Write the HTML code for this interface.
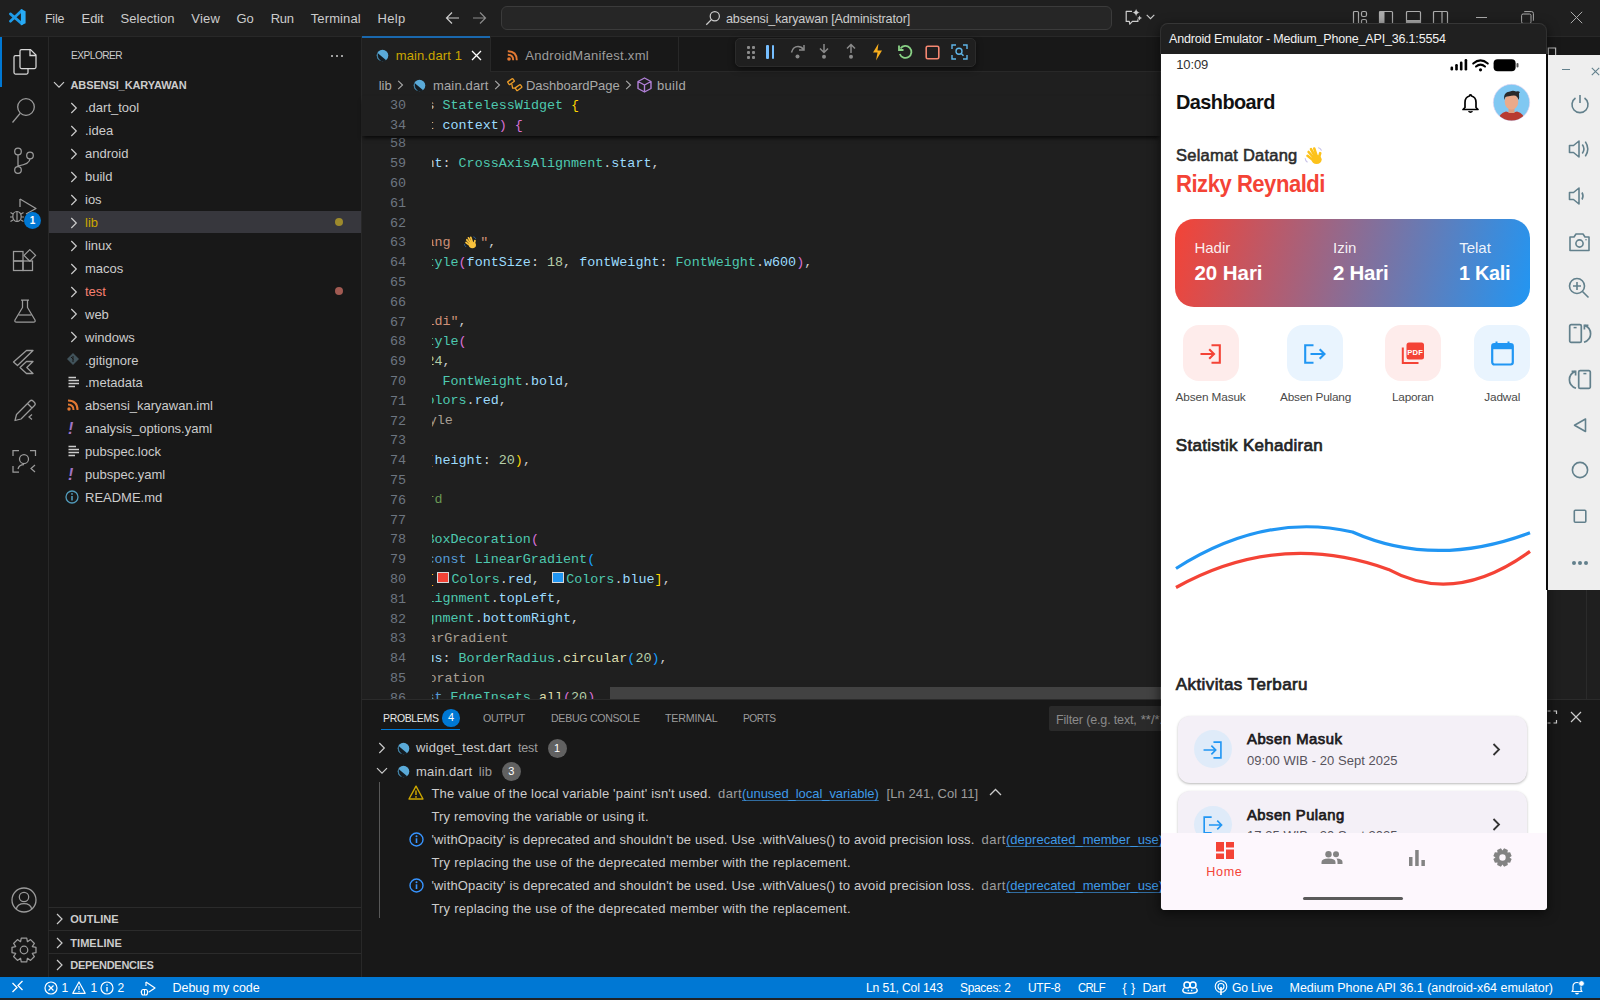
<!DOCTYPE html>
<html><head><meta charset="utf-8">
<style>
*{box-sizing:border-box;margin:0;padding:0}
html,body{width:1600px;height:1000px;overflow:hidden;background:#1f1f1f;font-family:"Liberation Sans",sans-serif}
body{position:relative}
.a{position:absolute}
svg.a{overflow:visible}
.t{position:absolute;white-space:pre;line-height:1}
</style></head><body>
<div class="a" style="left:0px;top:0px;width:1600px;height:37px;background:#1f1f1f;border-bottom:1px solid #282828;"></div>
<svg class="a" style="left:0px;top:0px;" width="36" height="36" viewBox="0 0 36 36" fill="none"><path d="M10.4 13.9 L21.8 23.6 M10.4 21.2 L21.8 10.6" stroke="#1e9be8" stroke-width="2.7" stroke-linecap="round"/><path d="M20.9 8.9 L25.6 11.2 V23.2 L20.9 25.6 Z" fill="#27aaf5"/></svg>
<div class="t" style="left:44.60px;top:12.45px;font-size:13px;color:#cccccc;letter-spacing:-0.225px;transform:scaleX(0.9550);transform-origin:0 0;">File</div>
<div class="t" style="left:81.60px;top:12.45px;font-size:13px;color:#cccccc;letter-spacing:-0.127px;">Edit</div>
<div class="t" style="left:120.50px;top:12.45px;font-size:13px;color:#cccccc;letter-spacing:0.057px;">Selection</div>
<div class="t" style="left:191.25px;top:12.45px;font-size:13px;color:#cccccc;letter-spacing:0.199px;">View</div>
<div class="t" style="left:236.50px;top:12.45px;font-size:13px;color:#cccccc;letter-spacing:-0.047px;">Go</div>
<div class="t" style="left:270.75px;top:12.45px;font-size:13px;color:#cccccc;letter-spacing:-0.286px;">Run</div>
<div class="t" style="left:310.75px;top:12.45px;font-size:13px;color:#cccccc;letter-spacing:0.109px;">Terminal</div>
<div class="t" style="left:377.50px;top:12.45px;font-size:13px;color:#cccccc;letter-spacing:0.312px;">Help</div>
<svg class="a" style="left:445px;top:11px;" width="15" height="14" viewBox="0 0 15 14" fill="none"><path d="M14 7 H1.5 M7 1.5 L1.5 7 L7 12.5" stroke="#cccccc" stroke-width="1.2"/></svg>
<svg class="a" style="left:472px;top:11px;" width="15" height="14" viewBox="0 0 15 14" fill="none"><path d="M1 7 H13.5 M8 1.5 L13.5 7 L8 12.5" stroke="#8b8b8b" stroke-width="1.2"/></svg>
<div class="a" style="left:501px;top:6px;width:611px;height:24px;background:#262626;border:1px solid #3b3b3b;border-radius:6px;"></div>
<svg class="a" style="left:705px;top:10px;" width="16" height="16" viewBox="0 0 16 16" fill="none"><circle cx="9.8" cy="6.2" r="4.6" stroke="#cccccc" stroke-width="1.2"/><path d="M6.6 9.4 L1.3 14.7" stroke="#cccccc" stroke-width="1.3"/></svg>
<div class="t" style="left:725.60px;top:12.45px;font-size:13px;color:#cccccc;letter-spacing:-0.173px;transform:scaleX(0.9707);transform-origin:0 0;">absensi_karyawan [Administrator]</div>
<svg class="a" style="left:1124px;top:8px;" width="20" height="18" viewBox="0 0 20 18" fill="none"><path d="M8 3.3 H2.2 V13.4 H5.3 L5.8 16.2 L8.4 13.4 H13.9 V11.2" stroke="#cccccc" stroke-width="1.2" stroke-linejoin="round"/><path d="M12.1 0.8 Q12.6 4.1 15.8 4.6 Q12.6 5.1 12.1 8.4 Q11.6 5.1 8.4 4.6 Q11.6 4.1 12.1 0.8 Z M15.6 7.5 Q15.9 9.7 18.1 10 Q15.9 10.3 15.6 12.5 Q15.3 10.3 13.1 10 Q15.3 9.7 15.6 7.5 Z" fill="#cccccc"/></svg>
<svg class="a" style="left:1146px;top:14.3px;" width="9" height="6" viewBox="0 0 9 6" fill="none"><path d="M0.7 0.8 L4.5 4.6 L8.3 0.8" stroke="#cccccc" stroke-width="1.1"/></svg>
<svg class="a" style="left:1352px;top:10px;" width="16" height="16" viewBox="0 0 16 16" fill="none"><rect x="1.5" y="1.5" width="5" height="13" rx="1" stroke="#ababab" stroke-width="1.2"/><rect x="9.5" y="1.5" width="5" height="5" rx="1.5" stroke="#ababab" stroke-width="1.2"/><rect x="9.5" y="9.5" width="5" height="5" rx="1.5" stroke="#ababab" stroke-width="1.2"/></svg>
<svg class="a" style="left:1378px;top:10px;" width="16" height="16" viewBox="0 0 16 16" fill="none"><rect x="1.5" y="1.5" width="13" height="14" rx="1" stroke="#ababab" stroke-width="1.2"/><rect x="1.5" y="1.5" width="5" height="14" fill="#ababab"/></svg>
<svg class="a" style="left:1405px;top:10px;" width="17" height="16" viewBox="0 0 17 16" fill="none"><rect x="1.5" y="1.5" width="14" height="14" rx="1" stroke="#ababab" stroke-width="1.2"/><rect x="1.5" y="10" width="14" height="5.5" fill="#ababab"/></svg>
<svg class="a" style="left:1432px;top:10px;" width="17" height="16" viewBox="0 0 17 16" fill="none"><rect x="1.5" y="1.5" width="14" height="14" rx="1" stroke="#ababab" stroke-width="1.2"/><path d="M10 1.5 V15.5" stroke="#ababab" stroke-width="1.2"/></svg>
<div class="a" style="left:1476px;top:17px;width:11px;height:1px;background:#ababab;"></div>
<svg class="a" style="left:1521px;top:11px;" width="13" height="13" viewBox="0 0 13 13" fill="none"><rect x="0.6" y="3" width="9.4" height="9.4" rx="1.5" stroke="#ababab" stroke-width="1"/><path d="M3 1 Q3.3 0.6 4 0.6 H10.5 Q12.4 0.6 12.4 2.5 V9 Q12.4 9.6 12 10" stroke="#ababab" stroke-width="1"/></svg>
<svg class="a" style="left:1570px;top:11px;" width="13" height="13" viewBox="0 0 13 13" fill="none"><path d="M0.8 0.8 L12.2 12.2 M12.2 0.8 L0.8 12.2" stroke="#ababab" stroke-width="1"/></svg>
<div class="a" style="left:0px;top:37px;width:49px;height:940px;background:#181818;border-right:1px solid #282828;"></div>
<div class="a" style="left:0px;top:37px;width:2px;height:50px;background:#0078d4;"></div>
<svg class="a" style="left:12px;top:48px;" width="26" height="28" viewBox="0 0 26 28" fill="none"><path d="M9.5 1.5 H18.5 L24 7 V19 Q24 20.5 22.5 20.5 H9.5 Q8 20.5 8 19 V3 Q8 1.5 9.5 1.5 Z" stroke="#d7d7d7" stroke-width="1.25"/><path d="M18 1.5 V7.5 H24" stroke="#d7d7d7" stroke-width="1.3"/><path d="M8 7.5 H3.5 Q2 7.5 2 9 V24.5 Q2 26 3.5 26 H14.5 Q16 26 16 24.5 V20.5" stroke="#d7d7d7" stroke-width="1.25"/></svg>
<svg class="a" style="left:11px;top:96px;" width="26" height="30" viewBox="0 0 26 30" fill="none"><circle cx="15" cy="11" r="8.3" stroke="#9b9b9b" stroke-width="1.3"/><path d="M9 17.5 L1.5 26.5" stroke="#9b9b9b" stroke-width="1.2"/></svg>
<svg class="a" style="left:11px;top:146px;" width="24" height="30" viewBox="0 0 24 30" fill="none"><circle cx="7" cy="5.5" r="3.3" stroke="#9b9b9b" stroke-width="1.25"/><circle cx="19" cy="9.5" r="3.3" stroke="#9b9b9b" stroke-width="1.25"/><circle cx="7" cy="24" r="3.3" stroke="#9b9b9b" stroke-width="1.25"/><path d="M7 9 V20.7 M19 12.8 Q19 18 7 20" stroke="#9b9b9b" stroke-width="1.25"/></svg>
<svg class="a" style="left:8px;top:196px;" width="32" height="30" viewBox="0 0 32 30" fill="none"><path d="M12 3 L28 12.5 L18 18" stroke="#9b9b9b" stroke-width="1.3" stroke-linejoin="round"/><path d="M12 3 V11" stroke="#9b9b9b" stroke-width="1.3"/><ellipse cx="9" cy="20.5" rx="4.2" ry="5" stroke="#9b9b9b" stroke-width="1.2"/><path d="M2.5 16.5 L5 18 M2 21 H4.8 M2.5 25.5 L5 24 M15.5 16.5 L13 18 M16 21 H13.2 M15.5 25.5 L13 24 M9 15.5 V26" stroke="#9b9b9b" stroke-width="1.2"/></svg>
<div class="a" style="left:24px;top:212px;width:17px;height:17px;border-radius:50%;background:#0078d4;color:#fff;font-size:10px;line-height:17px;text-align:center;font-weight:700">1</div>
<svg class="a" style="left:11px;top:248px;" width="28" height="28" viewBox="0 0 28 28" fill="none"><rect x="2.5" y="3.5" width="9.5" height="9.5" stroke="#9b9b9b" stroke-width="1.25"/><rect x="2.5" y="13" width="9.5" height="9.5" stroke="#9b9b9b" stroke-width="1.25"/><rect x="12" y="13" width="9.5" height="9.5" stroke="#9b9b9b" stroke-width="1.25"/><path d="M18.8 1.6 L24.6 7.4 L18.8 13.2 L13 7.4 Z" stroke="#9b9b9b" stroke-width="1.25" stroke-linejoin="round"/></svg>
<svg class="a" style="left:13px;top:298px;" width="24" height="26" viewBox="0 0 24 26" fill="none"><path d="M8 2 H16 M9.5 2 V9.5 L2 22 Q1.3 24 3.5 24 H20.5 Q22.7 24 22 22 L14.5 9.5 V2" stroke="#9b9b9b" stroke-width="1.25" stroke-linejoin="round"/><path d="M5.5 17 H18.5" stroke="#9b9b9b" stroke-width="1.25"/></svg>
<svg class="a" style="left:11px;top:348px;" width="26" height="28" viewBox="0 0 26 28" fill="none"><path d="M22 2.5 H15.5 L2.5 14 L6.5 17.5 Z" stroke="#9b9b9b" stroke-width="1.3" stroke-linejoin="round"/><path d="M22 13.5 H15.5 L9 19.5 L15.5 25.5 H22 L15.8 19.5 Z" stroke="#9b9b9b" stroke-width="1.3" stroke-linejoin="round"/></svg>
<svg class="a" style="left:12px;top:398px;" width="26" height="26" viewBox="0 0 26 26" fill="none"><path d="M3 22.5 L4.5 16.5 L18 3 Q19.5 1.5 21 3 L22.5 4.5 Q24 6 22.5 7.5 L9 21 Z M15.5 5.5 L20 10" stroke="#9b9b9b" stroke-width="1.25" stroke-linejoin="round"/><path d="M20 16.5 L17 19 L20 21.5" stroke="#9b9b9b" stroke-width="1.2"/></svg>
<svg class="a" style="left:11px;top:448px;" width="28" height="28" viewBox="0 0 28 28" fill="none"><path d="M2 8 V2.5 H8 M19 2.5 H24.5 V8 M2 18 V24 H8" stroke="#9b9b9b" stroke-width="1.25"/><circle cx="13" cy="11" r="4.5" stroke="#9b9b9b" stroke-width="1.25"/><path d="M7 21 Q8 16.5 13 16.5" stroke="#9b9b9b" stroke-width="1.25"/><path d="M24 17 L20 20.5 L24 24" stroke="#9b9b9b" stroke-width="1.2"/></svg>
<svg class="a" style="left:10px;top:886px;" width="28" height="28" viewBox="0 0 28 28" fill="none"><circle cx="14" cy="14" r="12" stroke="#9b9b9b" stroke-width="1.3"/><circle cx="14" cy="11" r="4.7" stroke="#9b9b9b" stroke-width="1.25"/><path d="M6.3 23 Q7.5 17.5 14 17.5 Q20.5 17.5 21.7 23" stroke="#9b9b9b" stroke-width="1.25"/></svg>
<svg class="a" style="left:10px;top:936px;" width="28" height="28" viewBox="0 0 28 28" fill="none"><polygon points="22.33,10.60 25.99,11.27 25.99,16.73 22.33,17.40 22.30,17.48 24.41,20.55 20.55,24.41 17.48,22.30 17.40,22.33 16.73,25.99 11.27,25.99 10.60,22.33 10.52,22.30 7.45,24.41 3.59,20.55 5.70,17.48 5.67,17.40 2.01,16.73 2.01,11.27 5.67,10.60 5.70,10.52 3.59,7.45 7.45,3.59 10.52,5.70 10.60,5.67 11.27,2.01 16.73,2.01 17.40,5.67 17.48,5.70 20.55,3.59 24.41,7.45 22.30,10.52" stroke="#9b9b9b" stroke-width="1.25" stroke-linejoin="round"/><circle cx="14" cy="14" r="3.78" stroke="#9b9b9b" stroke-width="1.25"/></svg>
<div class="a" style="left:49px;top:37px;width:313px;height:940px;background:#181818;border-right:1px solid #282828;"></div>
<div class="t" style="left:70.80px;top:50.15px;font-size:11px;color:#cccccc;letter-spacing:-0.545px;transform:scaleX(0.9215);transform-origin:0 0;">EXPLORER</div>
<div class="a" style="left:331px;top:54.5px;width:2px;height:2px;background:#cccccc;border-radius:1px;"></div>
<div class="a" style="left:336px;top:54.5px;width:2px;height:2px;background:#cccccc;border-radius:1px;"></div>
<div class="a" style="left:341px;top:54.5px;width:2px;height:2px;background:#cccccc;border-radius:1px;"></div>
<svg class="a" style="left:53px;top:81px;" width="12" height="8" viewBox="0 0 12 8" fill="none"><path d="M1 1.2 L6 6.2 L11 1.2" stroke="#cccccc" stroke-width="1.2"/></svg>
<div class="t" style="left:70.50px;top:80.15px;font-size:11px;color:#cccccc;font-weight:700;letter-spacing:-0.111px;">ABSENSI_KARYAWAN</div>
<div class="a" style="left:49px;top:211px;width:312px;height:22px;background:#37373d;"></div>
<svg class="a" style="left:70px;top:102.0px;" width="8" height="12" viewBox="0 0 8 12" fill="none"><path d="M1.3 1 L6.3 6 L1.3 11" stroke="#cccccc" stroke-width="1.2"/></svg>
<div class="t" style="left:85.00px;top:101.45px;font-size:13px;color:#cccccc;">.dart_tool</div>
<svg class="a" style="left:70px;top:124.94px;" width="8" height="12" viewBox="0 0 8 12" fill="none"><path d="M1.3 1 L6.3 6 L1.3 11" stroke="#cccccc" stroke-width="1.2"/></svg>
<div class="t" style="left:85.00px;top:124.45px;font-size:13px;color:#cccccc;">.idea</div>
<svg class="a" style="left:70px;top:147.88px;" width="8" height="12" viewBox="0 0 8 12" fill="none"><path d="M1.3 1 L6.3 6 L1.3 11" stroke="#cccccc" stroke-width="1.2"/></svg>
<div class="t" style="left:85.00px;top:147.45px;font-size:13px;color:#cccccc;">android</div>
<svg class="a" style="left:70px;top:170.82px;" width="8" height="12" viewBox="0 0 8 12" fill="none"><path d="M1.3 1 L6.3 6 L1.3 11" stroke="#cccccc" stroke-width="1.2"/></svg>
<div class="t" style="left:85.00px;top:170.45px;font-size:13px;color:#cccccc;">build</div>
<svg class="a" style="left:70px;top:193.76px;" width="8" height="12" viewBox="0 0 8 12" fill="none"><path d="M1.3 1 L6.3 6 L1.3 11" stroke="#cccccc" stroke-width="1.2"/></svg>
<div class="t" style="left:85.00px;top:193.45px;font-size:13px;color:#cccccc;">ios</div>
<svg class="a" style="left:70px;top:216.7px;" width="8" height="12" viewBox="0 0 8 12" fill="none"><path d="M1.3 1 L6.3 6 L1.3 11" stroke="#cccccc" stroke-width="1.2"/></svg>
<div class="t" style="left:85.00px;top:216.45px;font-size:13px;color:#cca700;">lib</div>
<svg class="a" style="left:70px;top:239.64000000000001px;" width="8" height="12" viewBox="0 0 8 12" fill="none"><path d="M1.3 1 L6.3 6 L1.3 11" stroke="#cccccc" stroke-width="1.2"/></svg>
<div class="t" style="left:85.00px;top:239.45px;font-size:13px;color:#cccccc;">linux</div>
<svg class="a" style="left:70px;top:262.58000000000004px;" width="8" height="12" viewBox="0 0 8 12" fill="none"><path d="M1.3 1 L6.3 6 L1.3 11" stroke="#cccccc" stroke-width="1.2"/></svg>
<div class="t" style="left:85.00px;top:262.45px;font-size:13px;color:#cccccc;">macos</div>
<svg class="a" style="left:70px;top:285.52px;" width="8" height="12" viewBox="0 0 8 12" fill="none"><path d="M1.3 1 L6.3 6 L1.3 11" stroke="#cccccc" stroke-width="1.2"/></svg>
<div class="t" style="left:85.00px;top:285.45px;font-size:13px;color:#f88070;">test</div>
<svg class="a" style="left:70px;top:308.46000000000004px;" width="8" height="12" viewBox="0 0 8 12" fill="none"><path d="M1.3 1 L6.3 6 L1.3 11" stroke="#cccccc" stroke-width="1.2"/></svg>
<div class="t" style="left:85.00px;top:308.45px;font-size:13px;color:#cccccc;">web</div>
<svg class="a" style="left:70px;top:331.4px;" width="8" height="12" viewBox="0 0 8 12" fill="none"><path d="M1.3 1 L6.3 6 L1.3 11" stroke="#cccccc" stroke-width="1.2"/></svg>
<div class="t" style="left:85.00px;top:331.45px;font-size:13px;color:#cccccc;">windows</div>
<div class="t" style="left:85.00px;top:354.45px;font-size:13px;color:#cccccc;">.gitignore</div>
<div class="t" style="left:85.00px;top:376.45px;font-size:13px;color:#cccccc;">.metadata</div>
<div class="t" style="left:85.00px;top:399.45px;font-size:13px;color:#cccccc;">absensi_karyawan.iml</div>
<div class="t" style="left:85.00px;top:422.45px;font-size:13px;color:#cccccc;">analysis_options.yaml</div>
<div class="t" style="left:85.00px;top:445.45px;font-size:13px;color:#cccccc;">pubspec.lock</div>
<div class="t" style="left:85.00px;top:468.45px;font-size:13px;color:#cccccc;">pubspec.yaml</div>
<div class="t" style="left:85.00px;top:491.45px;font-size:13px;color:#cccccc;">README.md</div>
<div class="a" style="left:334.5px;top:217.5px;width:8px;height:8px;border-radius:50%;background:#9d8a2c"></div>
<div class="a" style="left:334.5px;top:286.5px;width:8px;height:8px;border-radius:50%;background:#a15a52"></div>
<svg class="a" style="left:66px;top:352.34000000000003px;" width="14" height="14" viewBox="0 0 14 14" fill="none"><path d="M7 1 L13 7 L7 13 L1 7 Z" fill="#41535b"/><path d="M5 5 L7.5 7.5 M7 4 V10" stroke="#181818" stroke-width="1"/></svg>
<svg class="a" style="left:68px;top:376.28000000000003px;" width="12" height="12" viewBox="0 0 12 12" fill="none"><path d="M0.5 1.5 H8 M0.5 4.5 H11 M0.5 7.5 H11 M0.5 10.5 H7" stroke="#cccccc" stroke-width="1.3"/></svg>
<svg class="a" style="left:68px;top:445.1px;" width="12" height="12" viewBox="0 0 12 12" fill="none"><path d="M0.5 1.5 H8 M0.5 4.5 H11 M0.5 7.5 H11 M0.5 10.5 H7" stroke="#cccccc" stroke-width="1.3"/></svg>
<svg class="a" style="left:67px;top:399.22px;" width="12" height="12" viewBox="0 0 12 12" fill="none"><circle cx="2" cy="10" r="1.7" fill="#e37933"/><path d="M1 5.5 Q6.5 5.5 6.5 11 M1 1.5 Q10.5 1.5 10.5 11" stroke="#e37933" stroke-width="2"/></svg>
<div class="t" style="left:68.00px;top:420.90px;font-size:16px;color:#a074c4;font-weight:700;font-style:italic;">!</div>
<div class="t" style="left:68.00px;top:466.90px;font-size:16px;color:#a074c4;font-weight:700;font-style:italic;">!</div>
<svg class="a" style="left:65px;top:489.98px;" width="14" height="14" viewBox="0 0 14 14" fill="none"><circle cx="7" cy="7" r="6" stroke="#519aba" stroke-width="1.3"/><path d="M7 6 V10.5" stroke="#519aba" stroke-width="1.6"/><circle cx="7" cy="3.9" r="0.9" fill="#519aba"/></svg>
<div class="a" style="left:48px;top:907px;width:313px;height:1px;background:#2b2b2b;"></div>
<div class="a" style="left:48px;top:930px;width:313px;height:1px;background:#2b2b2b;"></div>
<div class="a" style="left:48px;top:953px;width:313px;height:1px;background:#2b2b2b;"></div>
<svg class="a" style="left:54px;top:913.2px;" width="10" height="12" viewBox="0 0 10 12" fill="none"><path d="M3 1 L8 6 L3 11" stroke="#cccccc" stroke-width="1.2"/></svg>
<div class="t" style="left:70.30px;top:914.15px;font-size:11px;color:#cccccc;font-weight:700;letter-spacing:-0.012px;">OUTLINE</div>
<svg class="a" style="left:54px;top:936.5px;" width="10" height="12" viewBox="0 0 10 12" fill="none"><path d="M3 1 L8 6 L3 11" stroke="#cccccc" stroke-width="1.2"/></svg>
<div class="t" style="left:70.30px;top:938.15px;font-size:11px;color:#cccccc;font-weight:700;letter-spacing:0.045px;">TIMELINE</div>
<svg class="a" style="left:54px;top:959px;" width="10" height="12" viewBox="0 0 10 12" fill="none"><path d="M3 1 L8 6 L3 11" stroke="#cccccc" stroke-width="1.2"/></svg>
<div class="t" style="left:70.30px;top:960.15px;font-size:11px;color:#cccccc;font-weight:700;letter-spacing:-0.300px;">DEPENDENCIES</div>
<div class="a" style="left:362px;top:37px;width:1238px;height:35px;background:#181818;border-bottom:1px solid #282828;"></div>
<div class="a" style="left:362px;top:36px;width:129px;height:36px;background:#1f1f1f;border-right:1px solid #282828;"></div>
<div class="a" style="left:362px;top:36px;width:128px;height:2px;background:#1a68ad;"></div>
<div class="a" style="left:491px;top:37px;width:188px;height:34px;background:#181818;border-right:1px solid #282828;"></div>
<svg class="a" style="left:376px;top:49px;" width="13" height="13" viewBox="0 0 13 13" fill="none"><circle cx="6.5" cy="6.5" r="5.8" fill="#5aaad8"/><path d="M1.6 4 L10.2 11.2 Q7 13 3.6 11.4 Q1 9 1.6 4 Z" fill="#141c22"/><path d="M1.3 5.2 Q1 9.5 4 11.6" stroke="#3f7ea0" stroke-width="1"/></svg>
<div class="t" style="left:395.70px;top:49.45px;font-size:13px;color:#cca700;letter-spacing:0.114px;">main.dart 1</div>
<svg class="a" style="left:471px;top:50px;" width="11" height="11" viewBox="0 0 11 11" fill="none"><path d="M1 1 L10 10 M10 1 L1 10" stroke="#ffffff" stroke-width="1.3"/></svg>
<svg class="a" style="left:507px;top:50px;" width="11" height="11" viewBox="0 0 11 11" fill="none"><circle cx="2" cy="9" r="1.8" fill="#e37933"/><path d="M0.8 4.8 Q6.2 4.8 6.2 10.2 M0.8 1.2 Q9.8 1.2 9.8 10.2" stroke="#e37933" stroke-width="1.9"/></svg>
<div class="t" style="left:525.30px;top:49.45px;font-size:13px;color:#9d9d9d;letter-spacing:0.312px;">AndroidManifest.xml</div>
<svg class="a" style="left:1547px;top:47px;" width="10" height="9" viewBox="0 0 10 9" fill="none"><path d="M1.3 8.5 V1 H8.6 V8.5" stroke="#bbbbbb" stroke-width="1.2"/></svg>
<div class="a" style="left:735px;top:38px;width:241px;height:29px;background:#1f1f1f;border:1px solid #2b2b2b;border-radius:5px;box-shadow:0 2px 6px rgba(0,0,0,0.5);"></div>
<div class="a" style="left:747px;top:46px;width:3px;height:3px;background:#8b8b8b;border-radius:1px;"></div>
<div class="a" style="left:747px;top:51px;width:3px;height:3px;background:#8b8b8b;border-radius:1px;"></div>
<div class="a" style="left:747px;top:56px;width:3px;height:3px;background:#8b8b8b;border-radius:1px;"></div>
<div class="a" style="left:752px;top:46px;width:3px;height:3px;background:#8b8b8b;border-radius:1px;"></div>
<div class="a" style="left:752px;top:51px;width:3px;height:3px;background:#8b8b8b;border-radius:1px;"></div>
<div class="a" style="left:752px;top:56px;width:3px;height:3px;background:#8b8b8b;border-radius:1px;"></div>
<div class="a" style="left:766px;top:45px;width:2.5px;height:14px;background:#75beff;border-radius:1px;"></div>
<div class="a" style="left:771.5px;top:45px;width:2.5px;height:14px;background:#75beff;border-radius:1px;"></div>
<svg class="a" style="left:789px;top:43px;" width="17" height="17" viewBox="0 0 17 17" fill="none"><path d="M2.5 9.5 Q4 3.5 9 3.5 Q12.5 3.5 14.5 6.5" stroke="#8b8b8b" stroke-width="1.5"/><path d="M15 2 V7 H10" stroke="#8b8b8b" stroke-width="1.5"/><circle cx="8.5" cy="13.5" r="2" fill="#8b8b8b"/></svg>
<svg class="a" style="left:817px;top:43px;" width="14" height="17" viewBox="0 0 14 17" fill="none"><path d="M7 1 V9 M3 5.5 L7 9.5 L11 5.5" stroke="#8b8b8b" stroke-width="1.5"/><circle cx="7" cy="13.8" r="2" fill="#8b8b8b"/></svg>
<svg class="a" style="left:844px;top:43px;" width="14" height="17" viewBox="0 0 14 17" fill="none"><path d="M7 10 V2 M3 5.5 L7 1.5 L11 5.5" stroke="#8b8b8b" stroke-width="1.5"/><circle cx="7" cy="13.8" r="2" fill="#8b8b8b"/></svg>
<svg class="a" style="left:871px;top:43px;" width="13" height="18" viewBox="0 0 13 18" fill="none"><path d="M7.5 0.5 L2 9.5 H6.5 L5 17.5 L11 7.5 H6.5 Z" fill="#f7ad1d"/></svg>
<svg class="a" style="left:897px;top:44px;" width="17" height="17" viewBox="0 0 17 17" fill="none"><path d="M3.5 4.5 A6 6 0 1 1 2.8 10" stroke="#89d185" stroke-width="1.8"/><path d="M2 1.5 V6 H6.5" stroke="#89d185" stroke-width="1.8"/></svg>
<svg class="a" style="left:925px;top:45px;" width="15" height="15" viewBox="0 0 15 15" fill="none"><rect x="1.2" y="1.2" width="12.6" height="12.6" rx="1.5" stroke="#f48771" stroke-width="1.6"/></svg>
<svg class="a" style="left:951px;top:44px;" width="17" height="16" viewBox="0 0 17 16" fill="none"><path d="M1 5 V1 H5 M12 1 H16 V5 M1 11 V15 H5 M12 15 H16 V11" stroke="#5fb5e8" stroke-width="1.4"/><circle cx="8" cy="7.3" r="3" stroke="#5fb5e8" stroke-width="1.4"/><path d="M10.2 9.5 L12.5 11.8" stroke="#5fb5e8" stroke-width="1.5"/></svg>
<div class="t" style="left:378.70px;top:79.45px;font-size:13px;color:#a9a9a9;">lib</div>
<svg class="a" style="left:397px;top:80px;" width="7" height="10" viewBox="0 0 7 10" fill="none"><path d="M1.2 0.8 L5.5 5 L1.2 9.2" stroke="#a9a9a9" stroke-width="1.1"/></svg>
<svg class="a" style="left:413px;top:79px;" width="13" height="13" viewBox="0 0 13 13" fill="none"><circle cx="6.5" cy="6.5" r="5.8" fill="#5aaad8"/><path d="M1.6 4 L10.2 11.2 Q7 13 3.6 11.4 Q1 9 1.6 4 Z" fill="#141c22"/><path d="M1.3 5.2 Q1 9.5 4 11.6" stroke="#3f7ea0" stroke-width="1"/></svg>
<div class="t" style="left:433.00px;top:79.45px;font-size:13px;color:#a9a9a9;letter-spacing:0.155px;">main.dart</div>
<svg class="a" style="left:494px;top:80px;" width="7" height="10" viewBox="0 0 7 10" fill="none"><path d="M1.2 0.8 L5.5 5 L1.2 9.2" stroke="#a9a9a9" stroke-width="1.1"/></svg>
<svg class="a" style="left:507px;top:78px;" width="16" height="15" viewBox="0 0 16 15" fill="none"><g transform="rotate(-35 4 3.6)"><rect x="0.9" y="1.9" width="6.2" height="3.4" rx="0.6" stroke="#ee9d28" stroke-width="1.3"/></g><g transform="rotate(-35 11.6 9.6)"><rect x="8.5" y="7.9" width="6.2" height="3.4" rx="0.6" stroke="#ee9d28" stroke-width="1.3"/></g><path d="M4.8 6 L5.6 10.2 H9" stroke="#ee9d28" stroke-width="1.3"/></svg>
<div class="t" style="left:526.00px;top:79.45px;font-size:13px;color:#a9a9a9;letter-spacing:-0.021px;">DashboardPage</div>
<svg class="a" style="left:625px;top:80px;" width="7" height="10" viewBox="0 0 7 10" fill="none"><path d="M1.2 0.8 L5.5 5 L1.2 9.2" stroke="#a9a9a9" stroke-width="1.1"/></svg>
<svg class="a" style="left:637px;top:77px;" width="15" height="16" viewBox="0 0 15 16" fill="none"><path d="M7.5 1 L14 4.5 V11.5 L7.5 15 L1 11.5 V4.5 Z M1 4.5 L7.5 8 L14 4.5 M7.5 8 V15" stroke="#b180d7" stroke-width="1.4" stroke-linejoin="round"/></svg>
<div class="t" style="left:657.00px;top:79.45px;font-size:13px;color:#a9a9a9;letter-spacing:0.306px;">build</div>
<div class="a" style="left:432.3px;top:96px;width:728px;height:603px;overflow:hidden">
<div class="t" style="left:-5.90px;top:60.82px;font-family:'Liberation Mono',monospace;font-size:13.4px;"><span style="color:#cccccc">n</span><span style="color:#9cdcfe">t</span><span style="color:#cccccc">: </span><span style="color:#4ec9b0">CrossAxisAlignment</span><span style="color:#cccccc">.</span><span style="color:#9cdcfe">start</span><span style="color:#cccccc">,</span></div>
<div class="t" style="left:-5.90px;top:140.02px;font-family:'Liberation Mono',monospace;font-size:13.4px;"><span style="color:#ce9178">ang </span></div>
<div class="t" style="left:-5.90px;top:159.82px;font-family:'Liberation Mono',monospace;font-size:13.4px;"><span style="color:#4ec9b0">tyle</span><span style="color:#da70d6">(</span><span style="color:#9cdcfe">fontSize</span><span style="color:#cccccc">: </span><span style="color:#b5cea8">18</span><span style="color:#cccccc">, </span><span style="color:#9cdcfe">fontWeight</span><span style="color:#cccccc">: </span><span style="color:#4ec9b0">FontWeight</span><span style="color:#cccccc">.</span><span style="color:#9cdcfe">w600</span><span style="color:#da70d6">)</span><span style="color:#cccccc">,</span></div>
<div class="t" style="left:-5.90px;top:219.22px;font-family:'Liberation Mono',monospace;font-size:13.4px;"><span style="color:#ce9178">ldi"</span><span style="color:#cccccc">,</span></div>
<div class="t" style="left:-5.90px;top:239.02px;font-family:'Liberation Mono',monospace;font-size:13.4px;"><span style="color:#4ec9b0">tyle</span><span style="color:#da70d6">(</span></div>
<div class="t" style="left:-5.90px;top:258.82px;font-family:'Liberation Mono',monospace;font-size:13.4px;"><span style="color:#b5cea8">24</span><span style="color:#cccccc">,</span></div>
<div class="t" style="left:-5.90px;top:278.62px;font-family:'Liberation Mono',monospace;font-size:13.4px;"><span style="color:#cccccc">: </span><span style="color:#4ec9b0">FontWeight</span><span style="color:#cccccc">.</span><span style="color:#9cdcfe">bold</span><span style="color:#cccccc">,</span></div>
<div class="t" style="left:-5.90px;top:298.42px;font-family:'Liberation Mono',monospace;font-size:13.4px;"><span style="color:#4ec9b0">olors</span><span style="color:#cccccc">.</span><span style="color:#9cdcfe">red</span><span style="color:#cccccc">,</span></div>
<div class="t" style="left:-5.90px;top:357.82px;font-family:'Liberation Mono',monospace;font-size:13.4px;"><span style="color:#ffd700">(</span><span style="color:#9cdcfe">height</span><span style="color:#cccccc">: </span><span style="color:#b5cea8">20</span><span style="color:#ffd700">)</span><span style="color:#cccccc">,</span></div>
<div class="t" style="left:-5.90px;top:397.42px;font-family:'Liberation Mono',monospace;font-size:13.4px;"><span style="color:#6a9955">rd</span></div>
<div class="t" style="left:-5.90px;top:437.02px;font-family:'Liberation Mono',monospace;font-size:13.4px;"><span style="color:#4ec9b0">BoxDecoration</span><span style="color:#da70d6">(</span></div>
<div class="t" style="left:-5.90px;top:456.82px;font-family:'Liberation Mono',monospace;font-size:13.4px;"><span style="color:#569cd6">const </span><span style="color:#4ec9b0">LinearGradient</span><span style="color:#179fff">(</span></div>
<div class="t" style="left:-5.90px;top:496.42px;font-family:'Liberation Mono',monospace;font-size:13.4px;"><span style="color:#4ec9b0">lignment</span><span style="color:#cccccc">.</span><span style="color:#9cdcfe">topLeft</span><span style="color:#cccccc">,</span></div>
<div class="t" style="left:-5.90px;top:516.22px;font-family:'Liberation Mono',monospace;font-size:13.4px;"><span style="color:#4ec9b0">gnment</span><span style="color:#cccccc">.</span><span style="color:#9cdcfe">bottomRight</span><span style="color:#cccccc">,</span></div>
<div class="t" style="left:-5.90px;top:555.82px;font-family:'Liberation Mono',monospace;font-size:13.4px;"><span style="color:#9cdcfe">us</span><span style="color:#cccccc">: </span><span style="color:#4ec9b0">BorderRadius</span><span style="color:#cccccc">.</span><span style="color:#dcdcaa">circular</span><span style="color:#179fff">(</span><span style="color:#b5cea8">20</span><span style="color:#179fff">)</span><span style="color:#cccccc">,</span></div>
<div class="t" style="left:-5.90px;top:595.42px;font-family:'Liberation Mono',monospace;font-size:13.4px;"><span style="color:#569cd6">st </span><span style="color:#4ec9b0">EdgeInsets</span><span style="color:#cccccc">.</span><span style="color:#dcdcaa">all</span><span style="color:#da70d6">(</span><span style="color:#b5cea8">20</span><span style="color:#da70d6">)</span><span style="color:#cccccc">,</span></div>
<div class="t" style="left:48.00px;top:140.02px;font-family:'Liberation Mono',monospace;font-size:13.4px;"><span style="color:#ce9178">"</span><span style="color:#cccccc">,</span></div>
<svg class="a" style="left:32.60px;top:140.40px;overflow:visible" width="11.2" height="12.5" viewBox="0 0 16 17"><g stroke="#f9c23c" stroke-width="2.6" stroke-linecap="round"><line x1="7" y1="13" x2="1.5" y2="8.8"/><line x1="8" y1="11" x2="2.6" y2="5"/><line x1="9.3" y1="10" x2="5" y2="2.2"/><line x1="10.8" y1="9.5" x2="8.3" y2="1.6"/><line x1="12.5" y1="12.5" x2="14.2" y2="6.2"/></g><ellipse cx="10.6" cy="12.6" rx="5.1" ry="4.5" fill="#f9c23c"/><path d="M12.5 0.8 Q14.5 1.2 15.3 3.2" stroke="#2d6bb0" stroke-width="1.1" fill="none" stroke-linecap="round"/><path d="M-0.8 11.5 Q-0.6 13.8 1.2 15" stroke="#2d6bb0" stroke-width="1.1" fill="none" stroke-linecap="round"/></svg>
<div class="t" style="left:-5.90px;top:476.62px;font-family:'Liberation Mono',monospace;font-size:13.4px;"><span style="color:#ffd700">[</span></div>
<div class="a" style="left:5.20px;top:476.30px;width:12px;height:11px;background:#f44336;border:1px solid #d8d8d8"></div>
<div class="t" style="left:19.20px;top:476.62px;font-family:'Liberation Mono',monospace;font-size:13.4px;"><span style="color:#4ec9b0">Colors</span><span style="color:#cccccc">.</span><span style="color:#9cdcfe">red</span><span style="color:#cccccc">, </span></div>
<div class="a" style="left:119.70px;top:476.30px;width:12px;height:11px;background:#2196f3;border:1px solid #d8d8d8"></div>
<div class="t" style="left:133.90px;top:476.62px;font-family:'Liberation Mono',monospace;font-size:13.4px;"><span style="color:#4ec9b0">Colors</span><span style="color:#cccccc">.</span><span style="color:#9cdcfe">blue</span><span style="color:#ffd700">]</span><span style="color:#cccccc">,</span></div>
<div class="t" style="left:-3.55px;top:318.22px;font-family:'Liberation Mono',monospace;font-size:13.4px;"><span style="color:#a89f94">yle</span></div>
<div class="t" style="left:-4.20px;top:536.02px;font-family:'Liberation Mono',monospace;font-size:13.4px;"><span style="color:#a89f94">arGradient</span></div>
<div class="t" style="left:-3.80px;top:575.62px;font-family:'Liberation Mono',monospace;font-size:13.4px;"><span style="color:#a89f94">oration</span></div>
</div>
<div class="a" style="left:362px;top:96px;width:798px;height:40px;background:#1f1f1f;box-shadow:0 3px 4px -1px rgba(0,0,0,0.75);z-index:1"></div>
<div class="a" style="left:432.3px;top:96px;width:728px;height:40px;overflow:hidden;z-index:2">
<div class="t" style="left:-5.90px;top:3.32px;font-family:'Liberation Mono',monospace;font-size:13.4px;"><span style="color:#cccccc">s </span><span style="color:#4ec9b0">StatelessWidget</span><span style="color:#cccccc"> </span><span style="color:#ffd700">{</span></div>
<div class="t" style="left:-5.90px;top:23.12px;font-family:'Liberation Mono',monospace;font-size:13.4px;"><span style="color:#cccccc">t </span><span style="color:#9cdcfe">context</span><span style="color:#da70d6">)</span><span style="color:#cccccc"> </span><span style="color:#da70d6">{</span></div>
</div>
<div class="a" style="left:362px;top:96px;width:70px;height:40px;z-index:2">
<div class="t" style="left:4px;top:3.32px;width:40px;text-align:right;font-family:'Liberation Mono',monospace;font-size:13.4px;color:#6e7681">30</div>
<div class="t" style="left:4px;top:23.12px;width:40px;text-align:right;font-family:'Liberation Mono',monospace;font-size:13.4px;color:#6e7681">34</div>
</div>
<div class="t" style="left:366.00px;top:137.32px;font-size:13.4px;color:#6e7681;font-family:'Liberation Mono',monospace;width:40px;text-align:right;">58</div>
<div class="t" style="left:366.00px;top:157.32px;font-size:13.4px;color:#6e7681;font-family:'Liberation Mono',monospace;width:40px;text-align:right;">59</div>
<div class="t" style="left:366.00px;top:177.32px;font-size:13.4px;color:#6e7681;font-family:'Liberation Mono',monospace;width:40px;text-align:right;">60</div>
<div class="t" style="left:366.00px;top:197.32px;font-size:13.4px;color:#6e7681;font-family:'Liberation Mono',monospace;width:40px;text-align:right;">61</div>
<div class="t" style="left:366.00px;top:217.32px;font-size:13.4px;color:#6e7681;font-family:'Liberation Mono',monospace;width:40px;text-align:right;">62</div>
<div class="t" style="left:366.00px;top:236.32px;font-size:13.4px;color:#6e7681;font-family:'Liberation Mono',monospace;width:40px;text-align:right;">63</div>
<div class="t" style="left:366.00px;top:256.32px;font-size:13.4px;color:#6e7681;font-family:'Liberation Mono',monospace;width:40px;text-align:right;">64</div>
<div class="t" style="left:366.00px;top:276.32px;font-size:13.4px;color:#6e7681;font-family:'Liberation Mono',monospace;width:40px;text-align:right;">65</div>
<div class="t" style="left:366.00px;top:296.32px;font-size:13.4px;color:#6e7681;font-family:'Liberation Mono',monospace;width:40px;text-align:right;">66</div>
<div class="t" style="left:366.00px;top:316.32px;font-size:13.4px;color:#6e7681;font-family:'Liberation Mono',monospace;width:40px;text-align:right;">67</div>
<div class="t" style="left:366.00px;top:335.32px;font-size:13.4px;color:#6e7681;font-family:'Liberation Mono',monospace;width:40px;text-align:right;">68</div>
<div class="t" style="left:366.00px;top:355.32px;font-size:13.4px;color:#6e7681;font-family:'Liberation Mono',monospace;width:40px;text-align:right;">69</div>
<div class="t" style="left:366.00px;top:375.32px;font-size:13.4px;color:#6e7681;font-family:'Liberation Mono',monospace;width:40px;text-align:right;">70</div>
<div class="t" style="left:366.00px;top:395.32px;font-size:13.4px;color:#6e7681;font-family:'Liberation Mono',monospace;width:40px;text-align:right;">71</div>
<div class="t" style="left:366.00px;top:415.32px;font-size:13.4px;color:#6e7681;font-family:'Liberation Mono',monospace;width:40px;text-align:right;">72</div>
<div class="t" style="left:366.00px;top:434.32px;font-size:13.4px;color:#6e7681;font-family:'Liberation Mono',monospace;width:40px;text-align:right;">73</div>
<div class="t" style="left:366.00px;top:454.32px;font-size:13.4px;color:#6e7681;font-family:'Liberation Mono',monospace;width:40px;text-align:right;">74</div>
<div class="t" style="left:366.00px;top:474.32px;font-size:13.4px;color:#6e7681;font-family:'Liberation Mono',monospace;width:40px;text-align:right;">75</div>
<div class="t" style="left:366.00px;top:494.32px;font-size:13.4px;color:#6e7681;font-family:'Liberation Mono',monospace;width:40px;text-align:right;">76</div>
<div class="t" style="left:366.00px;top:514.32px;font-size:13.4px;color:#6e7681;font-family:'Liberation Mono',monospace;width:40px;text-align:right;">77</div>
<div class="t" style="left:366.00px;top:533.32px;font-size:13.4px;color:#6e7681;font-family:'Liberation Mono',monospace;width:40px;text-align:right;">78</div>
<div class="t" style="left:366.00px;top:553.32px;font-size:13.4px;color:#6e7681;font-family:'Liberation Mono',monospace;width:40px;text-align:right;">79</div>
<div class="t" style="left:366.00px;top:573.32px;font-size:13.4px;color:#6e7681;font-family:'Liberation Mono',monospace;width:40px;text-align:right;">80</div>
<div class="t" style="left:366.00px;top:593.32px;font-size:13.4px;color:#6e7681;font-family:'Liberation Mono',monospace;width:40px;text-align:right;">81</div>
<div class="t" style="left:366.00px;top:613.32px;font-size:13.4px;color:#6e7681;font-family:'Liberation Mono',monospace;width:40px;text-align:right;">82</div>
<div class="t" style="left:366.00px;top:632.32px;font-size:13.4px;color:#6e7681;font-family:'Liberation Mono',monospace;width:40px;text-align:right;">83</div>
<div class="t" style="left:366.00px;top:652.32px;font-size:13.4px;color:#6e7681;font-family:'Liberation Mono',monospace;width:40px;text-align:right;">84</div>
<div class="t" style="left:366.00px;top:672.32px;font-size:13.4px;color:#6e7681;font-family:'Liberation Mono',monospace;width:40px;text-align:right;">85</div>
<div class="t" style="left:366.00px;top:692.32px;font-size:13.4px;color:#6e7681;font-family:'Liberation Mono',monospace;width:40px;text-align:right;">86</div>
<div class="a" style="left:610px;top:687px;width:936px;height:12px;background:rgba(121,121,121,0.4);"></div>
<div class="a" style="left:1586px;top:590px;width:1px;height:109px;background:#2b2b2b;"></div>
<div class="a" style="left:362px;top:699px;width:1238px;height:278px;background:#181818;border-top:1px solid #2b2b2b;"></div>
<div class="t" style="left:382.80px;top:713.15px;font-size:11px;color:#e7e7e7;letter-spacing:-0.346px;transform:scaleX(0.9525);transform-origin:0 0;">PROBLEMS</div>
<div class="a" style="left:442.4px;top:709.2px;width:17.5px;height:17.5px;border-radius:50%;background:#0078d4;color:#fff;font-size:11px;line-height:17.5px;text-align:center">4</div>
<div class="a" style="left:381px;top:729px;width:79px;height:1px;background:#0078d4;"></div>
<div class="t" style="left:482.60px;top:713.15px;font-size:11px;color:#9d9d9d;letter-spacing:-0.278px;transform:scaleX(0.9617);transform-origin:0 0;">OUTPUT</div>
<div class="t" style="left:550.50px;top:713.15px;font-size:11px;color:#9d9d9d;letter-spacing:-0.280px;transform:scaleX(0.9606);transform-origin:0 0;">DEBUG CONSOLE</div>
<div class="t" style="left:665.00px;top:713.15px;font-size:11px;color:#9d9d9d;letter-spacing:-0.202px;transform:scaleX(0.9701);transform-origin:0 0;">TERMINAL</div>
<div class="t" style="left:743.20px;top:713.15px;font-size:11px;color:#9d9d9d;letter-spacing:-0.500px;transform:scaleX(0.9289);transform-origin:0 0;">PORTS</div>
<div class="a" style="left:1049px;top:706px;width:140px;height:24.5px;background:#2a2a2a;border-radius:2px;"></div>
<div class="t" style="left:1055.60px;top:713.45px;font-size:13px;color:#8b8b8b;letter-spacing:-0.167px;transform:scaleX(0.9641);transform-origin:0 0;">Filter (e.g. text,</div>
<div class="t" style="left:1140.80px;top:713.45px;font-size:13px;color:#8b8b8b;">**/*.ts, !**/node_modules/**)</div>
<svg class="a" style="left:1547px;top:710px;" width="10" height="14" viewBox="0 0 10 14" fill="none"><path d="M0.5 1 H3.5 M0.5 13 H3.5 M6.5 1 H9.5 V4 M9.5 10 V13 H6.5" stroke="#cccccc" stroke-width="1.2"/></svg>
<svg class="a" style="left:1570px;top:711px;" width="12" height="12" viewBox="0 0 12 12" fill="none"><path d="M1 1 L11 11 M11 1 L1 11" stroke="#cccccc" stroke-width="1.2"/></svg>
<svg class="a" style="left:378px;top:742px;" width="8" height="12" viewBox="0 0 8 12" fill="none"><path d="M1.3 1 L6.3 6 L1.3 11" stroke="#cccccc" stroke-width="1.2"/></svg>
<svg class="a" style="left:397px;top:742px;" width="13" height="13" viewBox="0 0 13 13" fill="none"><circle cx="6.5" cy="6.5" r="5.8" fill="#5aaad8"/><path d="M1.6 4 L10.2 11.2 Q7 13 3.6 11.4 Q1 9 1.6 4 Z" fill="#141c22"/><path d="M1.3 5.2 Q1 9.5 4 11.6" stroke="#3f7ea0" stroke-width="1"/></svg>
<div class="t" style="left:416.00px;top:741.45px;font-size:13px;color:#cccccc;letter-spacing:0.214px;">widget_test.dart</div>
<div class="t" style="left:517.70px;top:741.45px;font-size:13px;color:#9d9d9d;letter-spacing:-0.184px;transform:scaleX(0.9637);transform-origin:0 0;">test</div>
<div class="a" style="left:547.5px;top:738.7px;width:19px;height:19px;border-radius:50%;background:#616161;color:#fff;font-size:11px;line-height:19px;text-align:center">1</div>
<svg class="a" style="left:376px;top:767px;" width="12" height="8" viewBox="0 0 12 8" fill="none"><path d="M1 1.2 L6 6.2 L11 1.2" stroke="#cccccc" stroke-width="1.2"/></svg>
<svg class="a" style="left:397px;top:765px;" width="13" height="13" viewBox="0 0 13 13" fill="none"><circle cx="6.5" cy="6.5" r="5.8" fill="#5aaad8"/><path d="M1.6 4 L10.2 11.2 Q7 13 3.6 11.4 Q1 9 1.6 4 Z" fill="#141c22"/><path d="M1.3 5.2 Q1 9.5 4 11.6" stroke="#3f7ea0" stroke-width="1"/></svg>
<div class="t" style="left:416.00px;top:765.45px;font-size:13px;color:#cccccc;letter-spacing:0.255px;">main.dart</div>
<div class="t" style="left:478.70px;top:765.45px;font-size:13px;color:#9d9d9d;letter-spacing:0.095px;">lib</div>
<div class="a" style="left:501.7px;top:762.3px;width:19px;height:19px;border-radius:50%;background:#616161;color:#fff;font-size:11px;line-height:19px;text-align:center">3</div>
<div class="a" style="left:378.5px;top:782px;width:1px;height:136px;background:#585858;"></div>
<svg class="a" style="left:408px;top:785px;" width="16" height="15" viewBox="0 0 16 15" fill="none"><path d="M8 1.2 L15 14 H1 Z" stroke="#cca700" stroke-width="1.4" stroke-linejoin="round"/><path d="M8 5.5 V10" stroke="#cca700" stroke-width="1.5"/><circle cx="8" cy="11.9" r="0.9" fill="#cca700"/></svg>
<div class="t" style="left:431.40px;top:787.45px;font-size:13px;color:#cccccc;letter-spacing:0.169px;">The value of the local variable 'paint' isn't used.</div>
<div class="t" style="left:718.00px;top:787.45px;font-size:13px;color:#9d9d9d;letter-spacing:0.398px;">dart</div>
<div class="t" style="left:742.00px;top:787.45px;font-size:13px;color:#3f9ae8;text-decoration:underline;text-underline-offset:2px;text-decoration-color:rgba(63,154,232,0.65);letter-spacing:-0.054px;">(unused_local_variable)</div>
<div class="t" style="left:886.50px;top:787.45px;font-size:13px;color:#9d9d9d;letter-spacing:0.048px;">[Ln 241, Col 11]</div>
<svg class="a" style="left:989px;top:788px;" width="13" height="8" viewBox="0 0 13 8" fill="none"><path d="M1 7 L6.5 1.5 L12 7" stroke="#cccccc" stroke-width="1.3"/></svg>
<div class="t" style="left:431.40px;top:810.45px;font-size:13px;color:#cccccc;letter-spacing:0.199px;">Try removing the variable or using it.</div>
<svg class="a" style="left:408.5px;top:831.5px;" width="15" height="15" viewBox="0 0 15 15" fill="none"><circle cx="7.5" cy="7.5" r="6.5" stroke="#3794ff" stroke-width="1.4"/><path d="M7.5 6.3 V11" stroke="#3794ff" stroke-width="1.6"/><circle cx="7.5" cy="4.2" r="1" fill="#3794ff"/></svg>
<div class="t" style="left:431.40px;top:833.45px;font-size:13px;color:#cccccc;letter-spacing:0.168px;">'withOpacity' is deprecated and shouldn't be used. Use .withValues() to avoid precision loss.</div>
<div class="t" style="left:981.40px;top:833.45px;font-size:13px;color:#9d9d9d;letter-spacing:0.548px;">dart</div>
<div class="t" style="left:1006.00px;top:833.45px;font-size:13px;color:#3f9ae8;text-decoration:underline;text-underline-offset:2px;text-decoration-color:rgba(63,154,232,0.65);letter-spacing:0.008px;">(deprecated_member_use)</div>
<div class="t" style="left:431.40px;top:856.45px;font-size:13px;color:#cccccc;letter-spacing:0.223px;">Try replacing the use of the deprecated member with the replacement.</div>
<svg class="a" style="left:408.5px;top:877.5px;" width="15" height="15" viewBox="0 0 15 15" fill="none"><circle cx="7.5" cy="7.5" r="6.5" stroke="#3794ff" stroke-width="1.4"/><path d="M7.5 6.3 V11" stroke="#3794ff" stroke-width="1.6"/><circle cx="7.5" cy="4.2" r="1" fill="#3794ff"/></svg>
<div class="t" style="left:431.40px;top:879.45px;font-size:13px;color:#cccccc;letter-spacing:0.168px;">'withOpacity' is deprecated and shouldn't be used. Use .withValues() to avoid precision loss.</div>
<div class="t" style="left:981.40px;top:879.45px;font-size:13px;color:#9d9d9d;letter-spacing:0.548px;">dart</div>
<div class="t" style="left:1006.00px;top:879.45px;font-size:13px;color:#3f9ae8;text-decoration:underline;text-underline-offset:2px;text-decoration-color:rgba(63,154,232,0.65);letter-spacing:0.008px;">(deprecated_member_use)</div>
<div class="t" style="left:431.40px;top:902.45px;font-size:13px;color:#cccccc;letter-spacing:0.223px;">Try replacing the use of the deprecated member with the replacement.</div>
<div class="a" style="left:0px;top:977.4px;width:1600px;height:20.8px;background:#0078d4;"></div>
<div class="a" style="left:0px;top:998px;width:1600px;height:2px;background:#1f2327;"></div>
<svg class="a" style="left:11px;top:980px;" width="13" height="13" viewBox="0 0 13 13" fill="none"><path d="M1.5 12 L6 7.5 L1.5 3 M11.5 1 L7 5.5 L11.5 10" stroke="#fff" stroke-width="1.3"/></svg>
<svg class="a" style="left:43.5px;top:981px;" width="14" height="14" viewBox="0 0 14 14" fill="none"><circle cx="7" cy="7" r="6" stroke="#fff" stroke-width="1.2"/><path d="M4.5 4.5 L9.5 9.5 M9.5 4.5 L4.5 9.5" stroke="#fff" stroke-width="1.2"/></svg>
<div class="t" style="left:61.50px;top:982.30px;font-size:12px;color:#ffffff;">1</div>
<svg class="a" style="left:72px;top:981px;" width="14" height="13" viewBox="0 0 14 13" fill="none"><path d="M7 1 L13.2 12.3 H0.8 Z" stroke="#fff" stroke-width="1.2" stroke-linejoin="round"/><path d="M7 5 V9" stroke="#fff" stroke-width="1.2"/><circle cx="7" cy="10.6" r="0.7" fill="#fff"/></svg>
<div class="t" style="left:90.50px;top:982.30px;font-size:12px;color:#ffffff;">1</div>
<svg class="a" style="left:100px;top:981px;" width="14" height="14" viewBox="0 0 14 14" fill="none"><circle cx="7" cy="7" r="6" stroke="#fff" stroke-width="1.2"/><path d="M7 6 V10.5" stroke="#fff" stroke-width="1.4"/><circle cx="7" cy="4" r="0.8" fill="#fff"/></svg>
<div class="t" style="left:117.50px;top:982.30px;font-size:12px;color:#ffffff;">2</div>
<svg class="a" style="left:140px;top:980px;" width="16" height="16" viewBox="0 0 16 16" fill="none"><path d="M6 2 L15 8 L9 12" stroke="#fff" stroke-width="1.2" stroke-linejoin="round"/><path d="M6 2 V6" stroke="#fff" stroke-width="1.2"/><rect x="1.5" y="9.5" width="6" height="5.5" rx="2" stroke="#fff" stroke-width="1.1"/><path d="M4.5 9.5 V15 M0.5 12 H1.5 M7.5 12 H8.5" stroke="#fff" stroke-width="1"/></svg>
<div class="t" style="left:172.50px;top:981.88px;font-size:12.5px;color:#ffffff;letter-spacing:-0.028px;">Debug my code</div>
<div class="t" style="left:866.25px;top:981.88px;font-size:12.5px;color:#ffffff;letter-spacing:-0.163px;transform:scaleX(0.9711);transform-origin:0 0;">Ln 51, Col 143</div>
<div class="t" style="left:960.00px;top:981.88px;font-size:12.5px;color:#ffffff;letter-spacing:-0.283px;transform:scaleX(0.9520);transform-origin:0 0;">Spaces: 2</div>
<div class="t" style="left:1028.00px;top:981.88px;font-size:12.5px;color:#ffffff;letter-spacing:-0.292px;transform:scaleX(0.9570);transform-origin:0 0;">UTF-8</div>
<div class="t" style="left:1077.50px;top:981.88px;font-size:12.5px;color:#ffffff;letter-spacing:-0.707px;transform:scaleX(0.9052);transform-origin:0 0;">CRLF</div>
<div class="t" style="left:1122.50px;top:981.88px;font-size:12.5px;color:#ffffff;letter-spacing:0.391px;">{ }</div>
<div class="t" style="left:1142.50px;top:981.88px;font-size:12.5px;color:#ffffff;letter-spacing:-0.156px;">Dart</div>
<svg class="a" style="left:1182px;top:979.5px;" width="16" height="14" viewBox="0 0 16 14" fill="none"><circle cx="5" cy="5" r="3" stroke="#fff" stroke-width="1.5"/><circle cx="11" cy="5" r="3" stroke="#fff" stroke-width="1.5"/><path d="M2.3 8 Q0.8 9 0.8 10.5 Q0.8 13.3 8 13.3 Q15.2 13.3 15.2 10.5 Q15.2 9 13.7 8" stroke="#fff" stroke-width="1.5"/><path d="M6.3 9.8 V11.2 M9.7 9.8 V11.2" stroke="#fff" stroke-width="1.3"/></svg>
<svg class="a" style="left:1214px;top:980px;" width="14" height="16" viewBox="0 0 14 16" fill="none"><circle cx="7" cy="6.5" r="5.8" stroke="#fff" stroke-width="1.1"/><circle cx="7" cy="6.5" r="3" stroke="#fff" stroke-width="1.1"/><path d="M7 7 V15" stroke="#fff" stroke-width="1.6"/></svg>
<div class="t" style="left:1232.00px;top:981.88px;font-size:12.5px;color:#ffffff;letter-spacing:-0.185px;transform:scaleX(0.9690);transform-origin:0 0;">Go Live</div>
<div class="t" style="left:1289.50px;top:981.88px;font-size:12.5px;color:#ffffff;letter-spacing:-0.028px;">Medium Phone API 36.1 (android-x64 emulator)</div>
<svg class="a" style="left:1570px;top:980px;" width="15" height="15" viewBox="0 0 15 15" fill="none"><path d="M2 11.5 H12 L11 10 V6.5 Q11 2.5 7 2.5 Q3 2.5 3 6.5 V10 Z M5.5 13 Q7 14.5 8.5 13" stroke="#fff" stroke-width="1.2" stroke-linejoin="round"/><circle cx="11.5" cy="3.5" r="2.8" fill="#fff" stroke="#0078d4" stroke-width="0.8"/></svg>
<div class="a" style="left:1160px;top:23px;width:387px;height:887px;border-radius:8px 8px 4px 4px;box-shadow:0 3px 12px rgba(0,0,0,0.6);z-index:9"></div>
<div class="a" style="left:1160px;top:23px;width:387px;height:31px;background:#202020;border-radius:8px 8px 0 0;border-top:1px solid #363636;border-left:1px solid #303030;border-right:1px solid #303030;z-index:10"></div>
<div class="t" style="left:1169.00px;top:32.88px;font-size:12.5px;color:#f2f2f2;z-index:11;letter-spacing:-0.182px;">Android Emulator - Medium_Phone_API_36.1:5554</div>
<div class="a" style="left:1160.5px;top:54px;width:386px;height:856px;background:#ffffff;border-radius:0 0 4px 4px;z-index:10"></div>
<div class="a" style="left:1546px;top:54px;width:2px;height:536px;background:#0a0a0a;z-index:11;"></div>
<div class="t" style="left:1176.25px;top:58.45px;font-size:13px;color:#303030;z-index:11;letter-spacing:-0.139px;">10:09</div>
<svg class="a" style="left:1450px;top:59px;z-index:11;" width="18" height="12" viewBox="0 0 18 12" fill="none"><rect x="0.5" y="7.5" width="2.6" height="4" rx="1.2" fill="#000"/><rect x="5.2" y="5" width="2.6" height="6.5" rx="1.2" fill="#000"/><rect x="9.9" y="2.5" width="2.6" height="9" rx="1.2" fill="#000"/><rect x="14.6" y="0" width="2.6" height="11.5" rx="1.2" fill="#000"/></svg>
<svg class="a" style="left:1472px;top:58.5px;z-index:11;" width="17" height="13" viewBox="0 0 17 13" fill="none"><path d="M1.2 4.6 Q8.5 -1.8 15.8 4.6" stroke="#000" stroke-width="2" stroke-linecap="round"/><path d="M4 7.6 Q8.5 3.6 13 7.6" stroke="#000" stroke-width="2" stroke-linecap="round"/><circle cx="8.5" cy="10.8" r="1.6" fill="#000"/></svg>
<svg class="a" style="left:1493px;top:58.5px;z-index:11;" width="27" height="13" viewBox="0 0 27 13" fill="none"><rect x="0.6" y="0.3" width="22" height="12" rx="4" fill="#000"/><rect x="23.5" y="4" width="2" height="4.6" rx="1" fill="#555"/></svg>
<div class="t" style="left:1175.60px;top:90.65px;font-size:21px;color:#111111;font-weight:700;z-index:11;letter-spacing:-0.605px;transform:scaleX(0.9478);transform-origin:0 0;">Dashboard</div>
<svg class="a" style="left:1462px;top:93px;z-index:11;" width="17" height="20" viewBox="0 0 17 20" fill="none"><path d="M8.5 1.8 Q9.5 1.8 9.5 3 Q14 4 14 9.5 V14.5 L16 16.5 H1 L3 14.5 V9.5 Q3 4 7.5 3 Q7.5 1.8 8.5 1.8 Z" stroke="#000" stroke-width="1.7" stroke-linejoin="round"/><path d="M6.5 18.2 Q8.5 20 10.5 18.2" stroke="#000" stroke-width="1.5"/></svg>
<svg class="a" style="left:1493px;top:84px;z-index:11;" width="37" height="37" viewBox="0 0 37 37" fill="none"><defs><clipPath id="av"><circle cx="18.5" cy="18.5" r="18"/></clipPath></defs><circle cx="18.5" cy="18.5" r="18.2" fill="#80c8f2" stroke="#e8d4f0" stroke-width="0.6"/><g clip-path="url(#av)"><path d="M5 37 Q6 29 13 27.5 L18.5 29 L24 27.5 Q31 29 32 37 Z" fill="#b83b30"/><rect x="15.5" y="22" width="6" height="7" fill="#e0a080"/><ellipse cx="18.5" cy="17.5" rx="6.8" ry="8" fill="#eaaa8a"/><path d="M11 16 Q10 8 17 7.5 Q20 6 23 7.5 Q26 6.5 27 8.5 Q25.5 8.5 26 10 Q26.5 14 25.5 16 Q24.5 11.5 21 11.5 Q15 12 12.5 13 Z" fill="#2a2a2a"/></g></svg>
<div class="t" style="left:1176.00px;top:147.47px;font-size:16.5px;color:#2b2b2b;-webkit-text-stroke:0.55px #2b2b2b;z-index:11;letter-spacing:0.227px;">Selamat Datang</div>
<svg class="a" style="left:1306px;top:147px;z-index:11;" width="16" height="17" viewBox="0 0 16 17" fill="none"><g stroke="#fcc21b" stroke-width="2.6" stroke-linecap="round"><line x1="7" y1="13" x2="1.5" y2="8.8"/><line x1="8" y1="11" x2="2.6" y2="5"/><line x1="9.3" y1="10" x2="5" y2="2.2"/><line x1="10.8" y1="9.5" x2="8.3" y2="1.6"/><line x1="12.5" y1="12.5" x2="14.2" y2="6.2"/></g><ellipse cx="10.6" cy="12.6" rx="5.1" ry="4.5" fill="#fcc21b"/><path d="M12.5 0.8 Q14.5 1.2 15.3 3.2" stroke="#c8c2e8" stroke-width="1.1" fill="none" stroke-linecap="round"/><path d="M-0.8 11.5 Q-0.6 13.8 1.2 15" stroke="#c8c2e8" stroke-width="1.1" fill="none" stroke-linecap="round"/></svg>
<div class="t" style="left:1176.00px;top:172.95px;font-size:23px;color:#f44336;font-weight:700;z-index:11;letter-spacing:-0.477px;transform:scaleX(0.9571);transform-origin:0 0;">Rizky Reynaldi</div>
<div class="a" style="left:1175.3px;top:218.5px;width:354.7px;height:88px;border-radius:19px;background:linear-gradient(104deg,#f44336 0%,#2196f3 100%);z-index:11"></div>
<div class="t" style="left:1194.40px;top:239.75px;font-size:15px;color:rgba(255,255,255,0.92);z-index:12;">Hadir</div>
<div class="t" style="left:1194.40px;top:263.07px;font-size:20.5px;color:#ffffff;font-weight:700;z-index:12;letter-spacing:-0.042px;">20 Hari</div>
<div class="t" style="left:1333.00px;top:239.75px;font-size:15px;color:rgba(255,255,255,0.92);z-index:12;">Izin</div>
<div class="t" style="left:1333.00px;top:263.07px;font-size:20.5px;color:#ffffff;font-weight:700;z-index:12;letter-spacing:-0.281px;">2 Hari</div>
<div class="t" style="left:1459.20px;top:239.75px;font-size:15px;color:rgba(255,255,255,0.92);z-index:12;">Telat</div>
<div class="t" style="left:1459.20px;top:263.07px;font-size:20.5px;color:#ffffff;font-weight:700;z-index:12;letter-spacing:-0.284px;transform:scaleX(0.9679);transform-origin:0 0;">1 Kali</div>
<div class="a" style="left:1182.5px;top:325.2px;width:56.3px;height:56.3px;border-radius:16px;background:#feeceb;z-index:11"></div>
<div class="t" style="left:1175.60px;top:392.47px;font-size:11.8px;color:#4a4a4a;z-index:11;letter-spacing:-0.135px;">Absen Masuk</div>
<div class="a" style="left:1287px;top:325.2px;width:56.3px;height:56.3px;border-radius:16px;background:#e9f4fe;z-index:11"></div>
<div class="t" style="left:1280.00px;top:392.47px;font-size:11.8px;color:#4a4a4a;z-index:11;letter-spacing:-0.206px;">Absen Pulang</div>
<div class="a" style="left:1384.7px;top:325.2px;width:56.3px;height:56.3px;border-radius:16px;background:#feeceb;z-index:11"></div>
<div class="t" style="left:1392.00px;top:392.47px;font-size:11.8px;color:#4a4a4a;z-index:11;letter-spacing:-0.242px;">Laporan</div>
<div class="a" style="left:1474.2px;top:325.2px;width:56.3px;height:56.3px;border-radius:16px;background:#e9f4fe;z-index:11"></div>
<div class="t" style="left:1484.20px;top:392.47px;font-size:11.8px;color:#4a4a4a;z-index:11;letter-spacing:-0.122px;">Jadwal</div>
<svg class="a" style="left:1199.5px;top:343.5px;z-index:12;" width="22" height="20" viewBox="0 0 22 20" fill="none"><path d="M11.5 1.2 H19.8 V18.8 H11.5" stroke="#f44336" stroke-width="2.1"/><path d="M0.5 10 H14 M9.2 5.2 L14 10 L9.2 14.8" stroke="#f44336" stroke-width="2.1"/></svg>
<svg class="a" style="left:1303.5px;top:343.5px;z-index:12;" width="23" height="20" viewBox="0 0 23 20" fill="none"><path d="M9.5 1.2 H1.2 V18.8 H9.5" stroke="#2196f3" stroke-width="2.1"/><path d="M6.5 10 H20.5 M15.7 5.2 L20.5 10 L15.7 14.8" stroke="#2196f3" stroke-width="2.1"/></svg>
<svg class="a" style="left:1401px;top:342px;z-index:12;" width="24" height="23" viewBox="0 0 24 23" fill="none"><path d="M1.8 5.5 V21 H17.5" stroke="#f44336" stroke-width="2"/><rect x="5.5" y="0.5" width="17.5" height="17" rx="2.5" fill="#f44336"/><text x="14.2" y="12.6" font-family="Liberation Sans" font-weight="700" font-size="7.6" fill="#fff" text-anchor="middle" letter-spacing="0.2">PDF</text></svg>
<svg class="a" style="left:1491px;top:341px;z-index:12;" width="23" height="25" viewBox="0 0 23 25" fill="none"><path d="M5.5 0.5 V4 M17.5 0.5 V4" stroke="#2196f3" stroke-width="2"/><rect x="1.2" y="3" width="20.6" height="20.5" rx="2.2" stroke="#2196f3" stroke-width="2.2"/><rect x="1.2" y="3" width="20.6" height="5.2" fill="#2196f3"/></svg>
<div class="t" style="left:1175.80px;top:437.05px;font-size:17px;color:#242424;-webkit-text-stroke:0.7px #242424;z-index:11;letter-spacing:0.287px;">Statistik Kehadiran</div>
<div class="t" style="left:1175.80px;top:676.05px;font-size:17px;color:#242424;-webkit-text-stroke:0.7px #242424;z-index:11;letter-spacing:0.402px;">Aktivitas Terbaru</div>
<svg class="a" style="left:1160px;top:460px;z-index:11;" width="390" height="160" viewBox="0 0 390 160" fill="none"><path d="M16 108.5 Q104.5 52 192.5 72 Q275 108.6 370 72.7" stroke="#2196f3" stroke-width="3.2" stroke-linecap="butt"/><path d="M16 127.5 Q119 70 228.4 109.4 Q295 146 370 91.4" stroke="#f44336" stroke-width="3.2"/></svg>
<div class="a" style="left:1178.3px;top:715.5px;width:348.5px;height:67.4px;border-radius:12px;background:#f4f0f7;box-shadow:0 1px 2.5px rgba(0,0,0,0.28);z-index:11"></div>
<div class="a" style="left:1193.8px;top:730.3px;width:37.8px;height:37.8px;border-radius:50%;background:#dfebf9;z-index:12"></div>
<svg class="a" style="left:1203px;top:740.7px;z-index:13;" width="20" height="18" viewBox="0 0 22 20" fill="none"><path d="M11.5 1.2 H19.8 V18.8 H11.5" stroke="#2196f3" stroke-width="1.8"/><path d="M0.5 10 H14 M9.2 5.2 L14 10 L9.2 14.8" stroke="#2196f3" stroke-width="1.8"/></svg>
<div class="t" style="left:1247.00px;top:731.92px;font-size:14.8px;color:#1d1b20;-webkit-text-stroke:0.75px #1d1b20;z-index:12;letter-spacing:0.513px;">Absen Masuk</div>
<div class="t" style="left:1247.00px;top:754.45px;font-size:13px;color:#57535c;z-index:12;letter-spacing:0.041px;">09:00 WIB - 20 Sept 2025</div>
<svg class="a" style="left:1492px;top:743.0px;z-index:12;" width="9" height="13" viewBox="0 0 9 13" fill="none"><path d="M1.5 1 L7 6.5 L1.5 12" stroke="#333" stroke-width="1.8"/></svg>
<div class="a" style="left:1178.3px;top:790.8px;width:348.5px;height:67.4px;border-radius:12px;background:#f4f0f7;box-shadow:0 1px 2.5px rgba(0,0,0,0.28);z-index:11"></div>
<div class="a" style="left:1193.8px;top:805.5999999999999px;width:37.8px;height:37.8px;border-radius:50%;background:#dfebf9;z-index:12"></div>
<svg class="a" style="left:1203px;top:816.0px;z-index:13;" width="20" height="18" viewBox="0 0 22 20" fill="none"><path d="M9.5 1.2 H1.2 V18.8 H9.5" stroke="#2196f3" stroke-width="1.8"/><path d="M6.5 10 H20.5 M15.7 5.2 L20.5 10 L15.7 14.8" stroke="#2196f3" stroke-width="1.8"/></svg>
<div class="t" style="left:1247.00px;top:807.92px;font-size:14.8px;color:#1d1b20;-webkit-text-stroke:0.75px #1d1b20;z-index:12;letter-spacing:0.462px;">Absen Pulang</div>
<div class="t" style="left:1247.00px;top:829.45px;font-size:13px;color:#57535c;z-index:12;letter-spacing:0.041px;">17:35 WIB - 20 Sept 2025</div>
<svg class="a" style="left:1492px;top:818.3px;z-index:12;" width="9" height="13" viewBox="0 0 9 13" fill="none"><path d="M1.5 1 L7 6.5 L1.5 12" stroke="#333" stroke-width="1.8"/></svg>
<div class="a" style="left:1160.5px;top:832.5px;width:386px;height:77.5px;background:#fdf7fd;border-radius:0 0 4px 4px;z-index:14"></div>
<svg class="a" style="left:1215.5px;top:842.4px;z-index:15;" width="18" height="17" viewBox="0 0 18 17" fill="none"><rect x="0" y="0" width="8" height="9.5" fill="#f44336"/><rect x="0" y="11.5" width="8" height="5.5" fill="#f44336"/><rect x="10" y="0" width="8" height="5.5" fill="#f44336"/><rect x="10" y="7.5" width="8" height="9.5" fill="#f44336"/></svg>
<div class="t" style="left:1206.30px;top:865.79px;font-size:12.6px;color:#f44336;z-index:15;letter-spacing:0.627px;">Home</div>
<svg class="a" style="left:1320.5px;top:851px;z-index:15;" width="22" height="13" viewBox="0 0 22 13" fill="none"><circle cx="7.5" cy="3.3" r="3.2" fill="#838383"/><circle cx="15" cy="3.3" r="3" fill="#838383"/><path d="M0.5 13 V11 Q0.5 7.5 7.5 7.5 Q14.5 7.5 14.5 11 V13 Z" fill="#838383"/><path d="M15.5 7.6 Q21.5 8 21.5 11 V13 H16.5 V11 Q16.5 9 15.5 7.6 Z" fill="#838383"/></svg>
<svg class="a" style="left:1408.5px;top:849.5px;z-index:15;" width="16" height="16" viewBox="0 0 16 16" fill="none"><rect x="0" y="7" width="3.5" height="9" fill="#838383"/><rect x="6.2" y="0" width="3.5" height="16" fill="#838383"/><rect x="12.4" y="10" width="3.5" height="6" fill="#838383"/></svg>
<svg class="a" style="left:1493px;top:848px;z-index:15;" width="19" height="19" viewBox="0 0 19 19" fill="none"><polygon points="16.50,9.50 18.66,11.10 17.11,14.85 14.45,14.45 14.45,14.45 14.85,17.11 11.10,18.66 9.50,16.50 9.50,16.50 7.90,18.66 4.15,17.11 4.55,14.45 4.55,14.45 1.89,14.85 0.34,11.10 2.50,9.50 2.50,9.50 0.34,7.90 1.89,4.15 4.55,4.55 4.55,4.55 4.15,1.89 7.90,0.34 9.50,2.50 9.50,2.50 11.10,0.34 14.85,1.89 14.45,4.55 14.45,4.55 17.11,4.15 18.66,7.90 16.50,9.50" fill="#838383"/><circle cx="9.5" cy="9.5" r="3.2" fill="#fdf7fd"/></svg>
<div class="a" style="left:1302.6px;top:896.7px;width:100.6px;height:3.7px;background:#5a5a5a;border-radius:2px;z-index:15;"></div>
<div class="a" style="left:1548px;top:54.5px;width:52px;height:535.5px;background:#eeeeee;z-index:10;"></div>
<div class="a" style="left:1562px;top:69px;width:8px;height:1.2px;background:#62808c;z-index:11;"></div>
<svg class="a" style="left:1590.5px;top:66.5px;z-index:11;" width="9" height="9" viewBox="0 0 9 9" fill="none"><path d="M0.8 0.8 L8.2 8.2 M8.2 0.8 L0.8 8.2" stroke="#62808c" stroke-width="1.1"/></svg>
<svg class="a" style="left:1570px;top:94px;z-index:11;" width="20" height="20" viewBox="0 0 20 20" fill="none"><path d="M10 1 V9" stroke="#62808c" stroke-width="1.6"/><path d="M5.5 4 A8 8 0 1 0 14.5 4" stroke="#62808c" stroke-width="1.6"/></svg>
<svg class="a" style="left:1568px;top:138px;z-index:11;" width="22" height="22" viewBox="0 0 22 22" fill="none"><path d="M1.5 7.5 H5.5 L11 3 V19 L5.5 14.5 H1.5 Z" stroke="#62808c" stroke-width="1.6" stroke-linejoin="round"/><path d="M14.3 6.5 Q17.6 11 14.3 15.5 M17.3 3.6 Q22.3 11 17.3 18.4" stroke="#62808c" stroke-width="1.6"/></svg>
<svg class="a" style="left:1568px;top:185px;z-index:11;" width="18" height="22" viewBox="0 0 18 22" fill="none"><path d="M1.5 7.5 H5.5 L11 3 V19 L5.5 14.5 H1.5 Z" stroke="#62808c" stroke-width="1.6" stroke-linejoin="round"/><path d="M14 7.5 Q16 11 14 14.5" stroke="#62808c" stroke-width="1.6"/></svg>
<svg class="a" style="left:1568px;top:232px;z-index:11;" width="23" height="20" viewBox="0 0 23 20" fill="none"><path d="M2 5 H6 L8 2 H15 L17 5 H21 V18.5 H2 Z" stroke="#62808c" stroke-width="1.6" stroke-linejoin="round"/><circle cx="11.5" cy="11.5" r="3.6" stroke="#62808c" stroke-width="1.6"/><circle cx="18" cy="7.8" r="0.8" fill="#62808c"/></svg>
<svg class="a" style="left:1568px;top:277px;z-index:11;" width="22" height="21" viewBox="0 0 22 21" fill="none"><circle cx="9" cy="9" r="7.5" stroke="#62808c" stroke-width="1.6"/><path d="M9 5 V13 M5 9 H13 M14.5 14.5 L20.5 20.5" stroke="#62808c" stroke-width="1.6"/></svg>
<svg class="a" style="left:1568px;top:323px;z-index:11;" width="25" height="21" viewBox="0 0 25 21" fill="none"><rect x="1.7" y="1.7" width="11.6" height="17.6" rx="1.4" stroke="#62808c" stroke-width="1.7"/><path d="M5.6 4.6 H8.6" stroke="#62808c" stroke-width="1.5"/><path d="M16.6 2.4 Q22.6 4.8 22.6 10.8 Q22.6 17 16 19.3" stroke="#62808c" stroke-width="1.7"/><path d="M16.4 6.4 V2.3 H20.4" stroke="#62808c" stroke-width="1.7"/></svg>
<svg class="a" style="left:1567px;top:369px;z-index:11;" width="25" height="21" viewBox="0 0 25 21" fill="none"><g transform="translate(25,0) scale(-1,1)"><rect x="1.7" y="1.7" width="11.6" height="17.6" rx="1.4" stroke="#62808c" stroke-width="1.7"/><path d="M5.6 4.6 H8.6" stroke="#62808c" stroke-width="1.5"/><path d="M16.6 2.4 Q22.6 4.8 22.6 10.8 Q22.6 17 16 19.3" stroke="#62808c" stroke-width="1.7"/><path d="M16.4 6.4 V2.3 H20.4" stroke="#62808c" stroke-width="1.7"/></g></svg>
<svg class="a" style="left:1573px;top:418px;z-index:11;" width="14" height="15" viewBox="0 0 14 15" fill="none"><path d="M12.5 1 V13.5 L1.5 7.25 Z" stroke="#62808c" stroke-width="1.6" stroke-linejoin="round"/></svg>
<svg class="a" style="left:1571px;top:461px;z-index:11;" width="18" height="18" viewBox="0 0 18 18" fill="none"><circle cx="9" cy="9" r="7.6" stroke="#62808c" stroke-width="1.6"/></svg>
<svg class="a" style="left:1573px;top:509px;z-index:11;" width="14" height="15" viewBox="0 0 14 15" fill="none"><rect x="1.3" y="1.3" width="11.5" height="12" rx="1" stroke="#62808c" stroke-width="1.6"/></svg>
<div class="a" style="left:1572px;top:560.5px;width:4px;height:4px;border-radius:50%;background:#62808c;z-index:11"></div>
<div class="a" style="left:1578px;top:560.5px;width:4px;height:4px;border-radius:50%;background:#62808c;z-index:11"></div>
<div class="a" style="left:1584px;top:560.5px;width:4px;height:4px;border-radius:50%;background:#62808c;z-index:11"></div>
</body></html>
